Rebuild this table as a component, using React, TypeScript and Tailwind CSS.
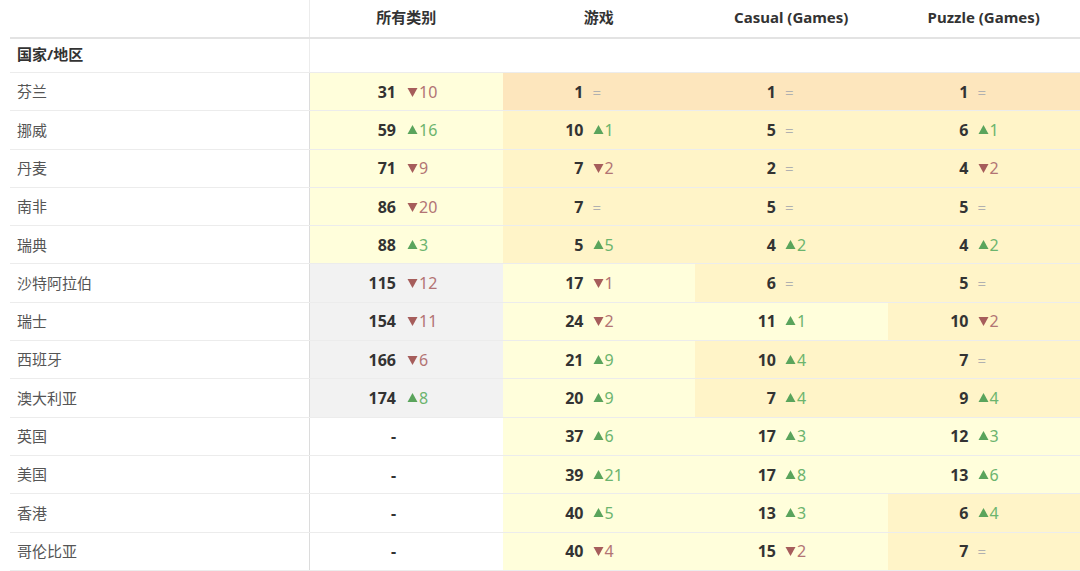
import React from 'react'

type Delta = { dir: 'up' | 'down' | 'eq'; n?: number }
type Cell = { rank: number | null; delta?: Delta; bg: string }
type Row = { name: string; cells: Cell[] }

const L = 'bg-[#fffedb]'
const Y = 'bg-[#fff4c8]'
const O = 'bg-[#fde6bd]'
const G = 'bg-[#f2f2f2]'
const W = 'bg-white'

const up = (n: number): Delta => ({ dir: 'up', n })
const dn = (n: number): Delta => ({ dir: 'down', n })
const eq: Delta = { dir: 'eq' }

const c = (rank: number | null, delta: Delta | undefined, bg: string): Cell => ({ rank, delta, bg })

const ROWS: Row[] = [
  { name: '芬兰', cells: [c(31, dn(10), L), c(1, eq, O), c(1, eq, O), c(1, eq, O)] },
  { name: '挪威', cells: [c(59, up(16), L), c(10, up(1), Y), c(5, eq, Y), c(6, up(1), Y)] },
  { name: '丹麦', cells: [c(71, dn(9), L), c(7, dn(2), Y), c(2, eq, Y), c(4, dn(2), Y)] },
  { name: '南非', cells: [c(86, dn(20), L), c(7, eq, Y), c(5, eq, Y), c(5, eq, Y)] },
  { name: '瑞典', cells: [c(88, up(3), L), c(5, up(5), Y), c(4, up(2), Y), c(4, up(2), Y)] },
  { name: '沙特阿拉伯', cells: [c(115, dn(12), G), c(17, dn(1), L), c(6, eq, Y), c(5, eq, Y)] },
  { name: '瑞士', cells: [c(154, dn(11), G), c(24, dn(2), L), c(11, up(1), L), c(10, dn(2), Y)] },
  { name: '西班牙', cells: [c(166, dn(6), G), c(21, up(9), L), c(10, up(4), Y), c(7, eq, Y)] },
  { name: '澳大利亚', cells: [c(174, up(8), G), c(20, up(9), L), c(7, up(4), Y), c(9, up(4), Y)] },
  { name: '英国', cells: [c(null, undefined, W), c(37, up(6), L), c(17, up(3), L), c(12, up(3), L)] },
  { name: '美国', cells: [c(null, undefined, W), c(39, up(21), L), c(17, up(8), L), c(13, up(6), L)] },
  { name: '香港', cells: [c(null, undefined, W), c(40, up(5), L), c(13, up(3), L), c(6, up(4), Y)] },
  { name: '哥伦比亚', cells: [c(null, undefined, W), c(40, dn(4), L), c(15, dn(2), L), c(7, eq, Y)] },
]

const HEADERS = ['所有类别', '游戏', 'Casual (Games)', 'Puzzle (Games)']

const Tri: React.FC<{ down?: boolean }> = ({ down }) => (
  <svg width="11" height="10" viewBox="0 0 11 10" className="shrink-0">
    {down ? (
      <polygon points="0.5,1 10.5,1 5.5,10" fill="#a65d5b" />
    ) : (
      <polygon points="5.5,0 10.5,9 0.5,9" fill="#5aa45c" />
    )}
  </svg>
)

const DeltaView: React.FC<{ d: Delta }> = ({ d }) => {
  if (d.dir === 'eq') return <span className="text-[15px] text-[#b0b0b0]">=</span>
  const down = d.dir === 'down'
  return (
    <span className={`flex items-center gap-[1px] text-[16px] ${down ? 'text-[#b27474]' : 'text-[#6cb46e]'}`}>
      <Tri down={down} />
      <span>{d.n}</span>
    </span>
  )
}

const RankCell: React.FC<{ cell: Cell; first: boolean }> = ({ cell, first }) => (
  <div className={`flex-1 flex items-center ${cell.bg}`}>
    <span className={`${first ? 'w-[86px]' : 'w-[81px]'} text-right font-bold text-[16px] text-[#333]`}>
      {cell.rank ?? '-'}
    </span>
    {cell.delta && <span className={first ? 'ml-[11px]' : 'ml-[9px]'}><DeltaView d={cell.delta} /></span>}
  </div>
)

export default function App() {
  return (
    <div className="w-[1080px] h-[571px] overflow-hidden bg-white pl-[10px] font-['Noto_Sans','Noto_Sans_CJK_SC',sans-serif]">
      {/* header */}
      <div className="flex h-[39px] border-b-2 border-[#e3e3e3]">
        <div className="w-[300px] border-r border-[#ececec]" />
        {HEADERS.map((h) => (
          <div key={h} className="flex-1 flex items-center justify-center pb-[2px] text-[15px] font-bold text-[#333]">
            {h}
          </div>
        ))}
      </div>
      <div className="flex h-[34px] border-b border-[#ececec]">
        <div className="w-[300px] border-r border-[#ececec] flex items-center pl-[7px] pb-[3px] text-[15px] font-bold text-[#333]">
          国家/地区
        </div>
        <div className="flex-1" />
      </div>
      {ROWS.map((r) => (
        <div key={r.name} className="flex h-[38.3px] border-b border-[#ececec]">
          <div className="w-[300px] border-r border-[#dcdcdc] flex items-center pl-[7px] text-[15px] text-[#555]">
            {r.name}
          </div>
          {r.cells.map((cell, i) => (
            <RankCell key={i} cell={cell} first={i === 0} />
          ))}
        </div>
      ))}
    </div>
  )
}
